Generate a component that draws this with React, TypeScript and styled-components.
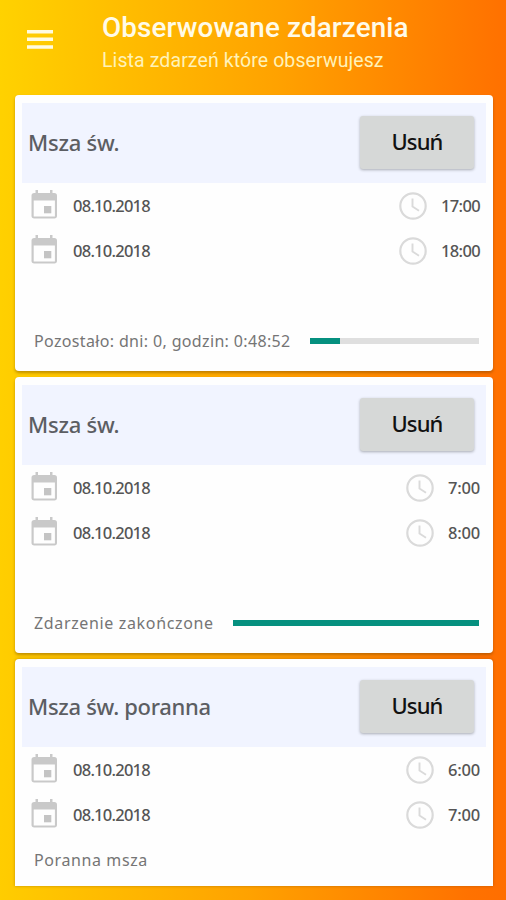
import React from "react";
import styled, { createGlobalStyle } from "styled-components";

const GlobalStyle = createGlobalStyle`
  * { box-sizing: border-box; }
  body { margin: 0; overflow: hidden; }
`;

const Screen = styled.main`
  height: 900px;
  width: 506px;
  overflow: hidden;
  background: linear-gradient(92deg, #ffd200 0%, #ffa200 52%, #ff7200 93%, #ff6e00 100%);
  font-family: "Noto Sans", "Open Sans", sans-serif;
`;

const Header = styled.header`
  display: flex;
  height: 95px;
  padding: 12px 0 0 27px;
  color: #fffbe8;
  font-family: Roboto, sans-serif;
`;

const MenuButton = styled.button`
  display: block;
  width: 26px;
  height: 18px;
  margin: 18px 49px 0 0;
  padding: 0;
  border: 0;
  background: none;
  svg { display: block; }
`;

const Title = styled.h1`
  margin: 0;
  font-size: 27.8px;
  font-weight: 500;
  line-height: 32px;
  letter-spacing: 0.14px;
  white-space: nowrap;
`;

const Subtitle = styled.p`
  margin: 5px 0 0;
  font-size: 19.5px;
  line-height: 24px;
  letter-spacing: 0.1px;
  color: #fff2b8;
  white-space: nowrap;
`;

const CardList = styled.section`
  display: flex;
  flex-direction: column;
  gap: 6px;
  padding: 0 13px 0 15px;
`;

const Card = styled.article<{ $cut?: boolean }>`
  height: ${(p) => (p.$cut ? 227 : 276)}px;
  padding: 8px 7px 0;
  background: #fefefe;
  border-radius: ${(p) => (p.$cut ? "4px 4px 0 0" : "4px")};
  box-shadow: 0 ${(p) => (p.$cut ? 0 : 2)}px 3px rgba(100, 60, 0, 0.4);
`;

const CardHeader = styled.div`
  display: flex;
  align-items: center;
  justify-content: space-between;
  height: 80px;
  padding: 0 12px 2px 6px;
  background: #f1f4ff;
`;

const CardTitle = styled.h2<{ $spacing: number }>`
  margin: 0;
  font-size: 22px;
  font-weight: 500;
  line-height: 30px;
  letter-spacing: ${(p) => p.$spacing}px;
  color: #5c5e63;
`;

const RemoveButton = styled.button`
  width: 114px;
  height: 53px;
  padding: 0 0 2px;
  border: 0;
  border-radius: 3px;
  background: #d6d8d7;
  box-shadow: 0 1px 3px rgba(0, 0, 0, 0.3);
  color: #111;
  font: 500 22px "Noto Sans", sans-serif;
  letter-spacing: -0.9px;
`;

const DateRow = styled.div`
  display: flex;
  align-items: center;
  height: 45px;
  padding: 0 6px 0 8px;
  font-size: 16.5px;
  font-weight: 500;
  color: #555;
  svg { display: block; flex: none; }
`;

const DateText = styled.span`
  flex: 1;
  margin-left: 15px;
  letter-spacing: -0.75px;
`;

const TimeText = styled.span<{ $wide: boolean }>`
  margin-left: 14px;
  letter-spacing: ${(p) => (p.$wide ? -0.65 : -0.2)}px;
`;

const StatusRow = styled.div`
  display: flex;
  align-items: center;
  height: 24px;
  margin-top: 56px;
  padding: 0 7px 0 12px;
`;

const Note = styled.span<{ $spacing: number }>`
  flex: none;
  font-size: 16px;
  line-height: 24px;
  letter-spacing: ${(p) => p.$spacing}px;
  color: #757575;
  white-space: nowrap;
`;

const Description = styled.div`
  padding: 11px 12px 0;
`;

const Track = styled.div`
  flex: 1;
  height: 6px;
  margin-left: 19px;
  background: #dfdfdf;
`;

const Fill = styled.div<{ $percent: number }>`
  width: ${(p) => p.$percent}%;
  height: 100%;
  background: #05907f;
`;

const MenuIcon = () => (
  <svg width="26" height="19" viewBox="0 0 26 19" fill="#fffbe0">
    <path d="M0 0h26v3.5H0zM0 7.6h26v3.5H0zM0 15.2h26v3.5H0z" />
  </svg>
);

const CalendarIcon = () => (
  <svg width="28" height="32" viewBox="0 0 28 32">
    <path
      fill="#c9c9c9"
      fillRule="evenodd"
      d="M5.500 0h2.500v3h12V0h2.500v3h1.800a2.700 2.700 0 0 1 2.700 2.700v20.100a2.700 2.700 0 0 1-2.700 2.700H4.200a2.700 2.700 0 0 1-2.700-2.700V5.700A2.700 2.700 0 0 1 4.200 3h1.300zM3.700 10.500v16h21.200v-16z"
    />
    <path fill="#c4c4c4" d="M14 16h7.300v7.300H14z" />
  </svg>
);

const ClockIcon = () => (
  <svg width="28" height="28" viewBox="0 0 28 28" fill="none" stroke="#dadada">
    <circle cx="14" cy="14" r="12.700" strokeWidth="2.200" />
    <path d="M13.500 6.500v8l6.500 4.200" strokeWidth="1.900" />
  </svg>
);

type Event = {
  title: string;
  spacing: number;
  times: string[];
  status?: { label: string; spacing: number; percent: number };
  description?: string;
};

const events: Event[] = [
  {
    title: "Msza św.",
    spacing: -0.25,
    times: ["17:00", "18:00"],
    status: { label: "Pozostało: dni: 0, godzin: 0:48:52", spacing: 0.35, percent: 18 },
  },
  {
    title: "Msza św.",
    spacing: -0.25,
    times: ["7:00", "8:00"],
    status: { label: "Zdarzenie zakończone", spacing: 0.65, percent: 100 },
  },
  { title: "Msza św. poranna", spacing: -0.3, times: ["6:00", "7:00"], description: "Poranna msza" },
];

export default function App() {
  return (
    <Screen>
      <GlobalStyle />
      <Header>
        <MenuButton aria-label="Menu"><MenuIcon /></MenuButton>
        <div>
          <Title>Obserwowane zdarzenia</Title>
          <Subtitle>Lista zdarzeń które obserwujesz</Subtitle>
        </div>
      </Header>
      <CardList>
        {events.map((event, i) => (
          <Card key={i} $cut={!event.status}>
            <CardHeader>
              <CardTitle $spacing={event.spacing}>{event.title}</CardTitle>
              <RemoveButton>Usuń</RemoveButton>
            </CardHeader>
            {event.times.map((time) => (
              <DateRow key={time}>
                <CalendarIcon />
                <DateText>08.10.2018</DateText>
                <ClockIcon />
                <TimeText $wide={time.length > 4}>{time}</TimeText>
              </DateRow>
            ))}
            {event.status && (
              <StatusRow>
                <Note $spacing={event.status.spacing}>{event.status.label}</Note>
                <Track><Fill $percent={event.status.percent} /></Track>
              </StatusRow>
            )}
            {event.description && (
              <Description><Note $spacing={0.6}>{event.description}</Note></Description>
            )}
          </Card>
        ))}
      </CardList>
    </Screen>
  );
}
